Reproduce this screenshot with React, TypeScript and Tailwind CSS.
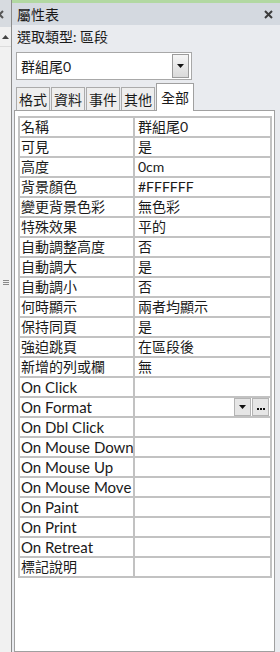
import React from 'react'

const rows: [string, string][] = [
  ['名稱', '群組尾0'],
  ['可見', '是'],
  ['高度', '0cm'],
  ['背景顏色', '#FFFFFF'],
  ['變更背景色彩', '無色彩'],
  ['特殊效果', '平的'],
  ['自動調整高度', '否'],
  ['自動調大', '是'],
  ['自動調小', '否'],
  ['何時顯示', '兩者均顯示'],
  ['保持同頁', '是'],
  ['強迫跳頁', '在區段後'],
  ['新增的列或欄', '無'],
  ['On Click', ''],
  ['On Format', ''],
  ['On Dbl Click', ''],
  ['On Mouse Down', ''],
  ['On Mouse Up', ''],
  ['On Mouse Move', ''],
  ['On Paint', ''],
  ['On Print', ''],
  ['On Retreat', ''],
  ['標記說明', ''],
]

const tabs = ['格式', '資料', '事件', '其他']

function DownArrow() {
  return (
    <svg width="7" height="4" viewBox="0 0 7 4">
      <path d="M0 0h7L3.5 4z" fill="#111" />
    </svg>
  )
}

function LeftStrip() {
  return (
    <div className="flex w-[12px] flex-col border-r border-[#8c8c8c] bg-[#f1f1f1]">
      <div className="h-[27px] bg-[#d7dbe0]">
        <svg width="11" height="27" viewBox="0 0 11 27">
          <path d="M-4 11l7 7M3 11l-7 7" stroke="#555" strokeWidth="2" />
        </svg>
      </div>
      <div className="flex h-[20px] items-center justify-center border-b border-[#dcdcdc]">
        <svg width="7" height="4" viewBox="0 0 7 4">
          <path d="M0 4h7L3.5 0z" fill="#444" />
        </svg>
      </div>
      <div className="flex flex-1 flex-col items-center pt-[233px]">
        <div className="flex flex-col gap-[1px]">
          <div className="h-px w-[6px] bg-[#8a8a8a]" />
          <div className="h-px w-[6px] bg-[#8a8a8a]" />
          <div className="h-px w-[6px] bg-[#8a8a8a]" />
        </div>
      </div>
    </div>
  )
}

export default function App() {
  return (
    <div className="flex h-[652px] w-[280px] overflow-hidden bg-[#e9ebef] font-['Lato','Noto_Sans_CJK_TC',sans-serif] text-[#1a1a1a]">
      <LeftStrip />

      <div className="flex flex-1 flex-col">
        <div className="h-[3px] bg-[#b2d8a2]" />
        <div className="flex h-[22px] items-center justify-between bg-[#d4d9e0] pl-[5px] pr-[7px] text-[14px]">
          <span>屬性表</span>
          <svg width="9" height="9" viewBox="0 0 9 9">
            <path d="M1 1l7 7M8 1l-7 7" stroke="#3c3c3c" strokeWidth="2" />
          </svg>
        </div>
        <div className="flex h-[22px] items-center pl-[5px] text-[14px]">選取類型: 區段</div>

        <div className="ml-[4px] mt-[5px] flex h-[28px] w-[176px] items-center justify-between border border-[#a8a8a8] bg-white pl-[4px] pr-[2px] text-[14px]">
          <span>群組尾0</span>
          <div className="flex h-[24px] w-[17px] items-center justify-center border border-[#9c9c9c] bg-gradient-to-b from-[#f6f6f6] to-[#dadada]">
            <DownArrow />
          </div>
        </div>

        <div className="relative z-10 ml-[4px] mt-[3px] flex h-[27px] items-end text-[14px]">
          {tabs.map(t => (
            <div
              key={t}
              className="mr-[1px] flex h-[23px] items-center border border-b-0 border-[#ababab] bg-[#eeeeee] px-[2px]"
            >
              {t}
            </div>
          ))}
          <div className="-mb-px flex h-[28px] items-center border border-b-0 border-[#a0a0a0] bg-white px-[4px]">
            全部
          </div>
        </div>

        <div className="ml-[2px] mr-[5px] flex-1 border border-[#a0a0a0] bg-white pl-[3px] pr-[2px] pt-[5px]">
          <div className="border-x-2 border-t-2 border-[#c2c2c2]">
            {rows.map(([label, value]) => {
              const latin = /^[ -~]+$/.test(label)
              return (
                <div key={label} className="grid h-[20px] grid-cols-[115px_1fr] border-b-2 border-[#c2c2c2]">
                  <div
                    className={`overflow-hidden whitespace-nowrap border-r-2 border-[#c2c2c2] pl-[1px] leading-[18px] ${latin ? 'text-[15px]' : 'text-[14px]'}`}
                  >
                    {label}
                  </div>
                  <div className="flex items-center overflow-hidden whitespace-nowrap pl-[3px] text-[14px] leading-[18px]">
                    {value}
                    {label === 'On Format' && (
                      <div className="ml-auto mr-[1px] flex gap-[1px]">
                        <div className="flex h-[18px] w-[17px] items-center justify-center border border-[#b4b4b4] bg-[#e6e6e6]">
                          <DownArrow />
                        </div>
                        <div className="flex h-[18px] w-[17px] items-center justify-center gap-[1px] border border-[#b4b4b4] bg-[#e6e6e6] pt-[3px]">
                          <div className="h-[2px] w-[2px] bg-[#111]" />
                          <div className="h-[2px] w-[2px] bg-[#111]" />
                          <div className="h-[2px] w-[2px] bg-[#111]" />
                        </div>
                      </div>
                    )}
                  </div>
                </div>
              )
            })}
          </div>
        </div>
      </div>
    </div>
  )
}
